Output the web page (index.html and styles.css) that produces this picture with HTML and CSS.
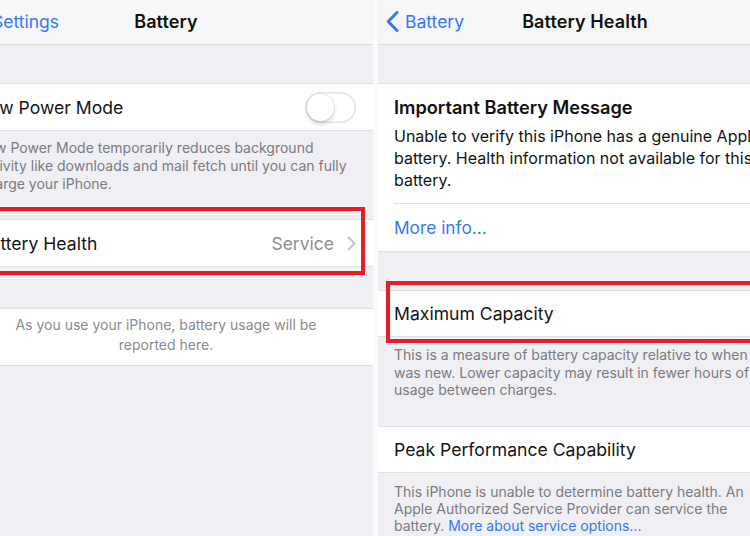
FILE: index.html
```html
<!DOCTYPE html>
<html lang="en">
<head>
<meta charset="utf-8">
<title>Battery Health</title>
<link rel="stylesheet" href="styles.css">
</head>
<body>
<div class="screen">
  <section class="panel panel-left">
    <header class="nav">
      <div class="nav-back nav-back-left">
        <svg class="chev-back" viewBox="0 0 13 21" width="13" height="21"><path d="M11 1.5 L2.2 10.5 L11 19.5"/></svg>
        <span>Settings</span>
      </div>
      <div class="nav-title">Battery</div>
      <div></div>
    </header>
    <div class="gap gap-top"></div>
    <div class="group">
      <div class="row row-left row-lpm">
        <span class="label">Low Power Mode</span>
        <span class="toggle"><span class="knob"></span></span>
      </div>
    </div>
    <p class="footer footer-left">Low Power Mode temporarily reduces background<br>activity like downloads and mail fetch until you can fully<br>charge your iPhone.</p>
    <div class="group">
      <div class="row row-left row-health">
        <span class="label">Battery Health</span>
        <span class="detail">Service<svg class="chev" viewBox="0 0 9 15" width="9" height="15"><path d="M1.5 1.5 L7.5 7.5 L1.5 13.5"/></svg></span>
        <span class="mark mark-left"></span>
      </div>
    </div>
    <div class="gap gap-usage"></div>
    <div class="group usage">
      <p class="usage-text">As you use your iPhone, battery usage will be<br>reported here.</p>
    </div>
  </section>

  <section class="panel panel-right">
    <header class="nav">
      <div class="nav-back">
        <svg class="chev-back" viewBox="0 0 13 21" width="13" height="21"><path d="M11 1.5 L2.2 10.5 L11 19.5"/></svg>
        <span>Battery</span>
      </div>
      <div class="nav-title">Battery Health</div>
      <div></div>
    </header>
    <div class="gap gap-top"></div>
    <div class="group message">
      <div class="message-body">
        <h2 class="message-title">Important Battery Message</h2>
        <p class="message-text">Unable to verify this iPhone has a genuine Apple<br>battery. Health information not available for this<br>battery.</p>
      </div>
      <div class="link-row"><span class="link">More info...</span></div>
    </div>
    <div class="gap gap-cap"></div>
    <div class="group">
      <div class="row row-right row-cap">
        <span class="label">Maximum Capacity</span>
        <span class="mark mark-right"></span>
      </div>
    </div>
    <p class="footer footer-right footer-cap">This is a measure of battery capacity relative to when it<br>was new. Lower capacity may result in fewer hours of<br>usage between charges.</p>
    <div class="group">
      <div class="row row-right row-peak">
        <span class="label">Peak Performance Capability</span>
      </div>
    </div>
    <p class="footer footer-right footer-peak">This iPhone is unable to determine battery health. An<br>Apple Authorized Service Provider can service the<br>battery. <span class="link">More about service options...</span></p>
  </section>
</div>
</body>
</html>
```
FILE: styles.css
```css
* { box-sizing: border-box; }

html, body {
  margin: 0;
  padding: 0;
  width: 750px;
  height: 536px;
  overflow: hidden;
  background: #fbfbfc;
}

body {
  font-family: Inter, "Noto Sans", "Liberation Sans", sans-serif;
  color: #141414;
  -webkit-font-smoothing: antialiased;
}

.screen {
  display: flex;
  gap: 5px;
  margin-left: -41px;
  width: 840px;
  height: 536px;
}

.panel {
  width: 414px;
  flex: none;
  height: 536px;
  background: #efeff4;
  display: flex;
  flex-direction: column;
}

.nav {
  height: 45px;
  flex: none;
  background: #f7f7f8;
  border-bottom: 1px solid #dcdcdf;
  display: grid;
  grid-template-columns: 1fr auto 1fr;
  align-items: center;
  padding-bottom: 2px;
}

.nav-back {
  display: flex;
  align-items: center;
  gap: 6px;
  padding-left: 8px;
  color: #3478f6;
  font-size: 17.5px;
}

.nav-back-left { padding-left: 14px; }

.chev-back path {
  fill: none;
  stroke: #3478f6;
  stroke-width: 3;
  stroke-linecap: round;
  stroke-linejoin: round;
}

.nav-title {
  font-size: 18px;
  font-weight: 600;
  color: #111;
  letter-spacing: 0.1px;
}

.gap { flex: none; }
.gap-top { height: 38px; }
.gap-usage { height: 41px; }
.gap-cap { height: 38px; }

.group {
  background: #fff;
  border-top: 1px solid #e0e0e4;
  border-bottom: 1px solid #e0e0e4;
  flex: none;
}

.row {
  display: flex;
  align-items: center;
  justify-content: space-between;
  position: relative;
}

.row-left { padding: 0 17px 0 20px; }
.row-right { padding: 0 16px; }

.row-lpm { height: 46px; }
.row-health { height: 46px; }
.row-cap { height: 45px; }
.row-peak { height: 45px; }

.label {
  font-size: 17.6px;
  color: #141414;
}

.toggle {
  width: 51px;
  height: 31px;
  border-radius: 16px;
  background: #fff;
  box-shadow: inset 0 0 0 1.5px #e4e4e8;
  display: flex;
  align-items: center;
  padding: 2px;
}

.knob {
  width: 27px;
  height: 27px;
  border-radius: 50%;
  background: #fff;
  box-shadow: 0 3px 5px rgba(0,0,0,0.16), 0 0 0 0.6px rgba(0,0,0,0.1);
}

.detail {
  display: flex;
  align-items: center;
  gap: 13px;
  font-size: 17.5px;
  color: #8e8e93;
}

.chev path {
  fill: none;
  stroke: #c4c4c9;
  stroke-width: 2;
  stroke-linecap: round;
  stroke-linejoin: round;
}

.footer {
  margin: 0;
  flex: none;
  font-size: 14px;
  color: #7b7b80;
  white-space: nowrap;
}

.footer-left {
  padding: 8px 0 26px 20px;
  line-height: 18px;
}

.footer-right { padding-left: 16px; }

.footer-cap {
  padding-top: 9px;
  padding-bottom: 27px;
  line-height: 17.5px;
}

.footer-peak {
  padding-top: 10px;
  line-height: 17px;
}

.usage { padding: 6px 0 10px; }

.usage-text {
  margin: 0;
  text-align: center;
  font-size: 14px;
  line-height: 20px;
  color: #8a8a8f;
}

.message-body {
  padding: 11px 16px 12px 0;
  border-bottom: 1px solid #e0e0e4;
  margin-left: 16px;
  white-space: nowrap;
}

.message-title {
  margin: 0 0 6px;
  font-size: 18.2px;
  font-weight: 600;
  line-height: 24px;
  color: #111;
}

.message-text {
  margin: 0;
  font-size: 16px;
  line-height: 22px;
  color: #141414;
}

.link-row {
  height: 47px;
  display: flex;
  align-items: center;
  padding-left: 16px;
}

.link-row .link { font-size: 17.3px; }

.link { color: #3478f6; }

.mark {
  position: absolute;
  border: 4px solid #ea1c27;
  pointer-events: none;
}

.mark-left {
  top: -13px;
  bottom: -9px;
  left: 2px;
  right: 8px;
}

.mark-right {
  top: -10px;
  bottom: -7px;
  left: 8px;
  right: -40px;
}
```
